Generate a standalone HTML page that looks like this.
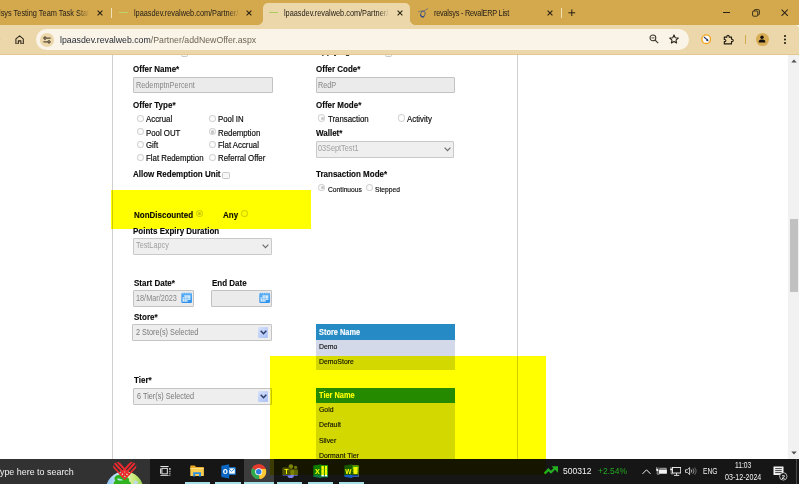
<!DOCTYPE html>
<html lang="en">
<head>
<meta charset="utf-8">
<title>Add New Offer</title>
<style>
*{box-sizing:border-box;margin:0;padding:0}
html,body{width:799px;height:484px;overflow:hidden;background:#fff}
body{position:relative;font-family:"Liberation Sans",Arial,sans-serif;color:#000}
.abs{position:absolute}
/* ---------- browser chrome ---------- */
#tabstrip{position:absolute;left:0;top:0;width:799px;height:25px;background:#d4a84c}
#toolbar{position:absolute;left:0;top:25px;width:799px;height:29.5px;background:#ecd7aa;border-bottom:1px solid #e2c88f;border-top-right-radius:4px}
.tabtxt{position:absolute;top:8.8px;font-size:8.2px;line-height:10px;color:#262118;white-space:nowrap;overflow:hidden;transform:scaleX(.9);transform-origin:0 0}
.tabx{position:absolute;top:9.5px;width:6px;height:6px}
.tsep{position:absolute;top:8px;width:1px;height:9.5px;background:#f1dfb7}
#acttab{position:absolute;left:263.4px;top:3.2px;width:146.4px;height:22px;background:#ecd7aa;border-radius:5px 5px 0 0}
#acttab:before,#acttab:after{content:"";position:absolute;bottom:0;width:5px;height:5px}
#acttab:before{left:-5px;background:radial-gradient(circle at 0 0,rgba(0,0,0,0) 4.6px,#ecd7aa 5px)}
#acttab:after{right:-5px;background:radial-gradient(circle at 100% 0,rgba(0,0,0,0) 4.6px,#ecd7aa 5px)}
#omni{position:absolute;left:36.3px;top:29px;width:652.9px;height:21.4px;border-radius:10.7px;background:#faf4e8}
#url{position:absolute;left:59.8px;top:34px;font-size:9px;line-height:12px;color:#262a33;white-space:nowrap;transform:scaleX(.972);transform-origin:0 0}
#url span{color:#6f6654}
/* ---------- page ---------- */
#page{position:absolute;left:0;top:55px;width:788px;height:404px;background:#fff;overflow:hidden}
.vline{position:absolute;top:55px;width:1px;height:404px;background:#cfcfcf}
.lbl{position:absolute;font-weight:bold;font-size:8.8px;line-height:10px;white-space:nowrap;color:#0a0a0a;-webkit-text-stroke:0.12px #0a0a0a;transform:scaleX(.909);transform-origin:0 0}
.rl{position:absolute;font-size:8.7px;line-height:10px;white-space:nowrap;color:#0c0c0c;-webkit-text-stroke:0.18px #0c0c0c;transform:scaleX(.902);transform-origin:0 0}
.sm{position:absolute;font-size:7.5px;line-height:9px;white-space:nowrap;color:#0c0c0c;-webkit-text-stroke:0.15px #0c0c0c;transform:scaleX(.893);transform-origin:0 0}
.radio{position:absolute;width:7.2px;height:7.6px;margin:-0.3px 0 0 -0.3px;border-radius:50%;border:0.7px solid #d3d3d3;background:#fcfcfc}
.radio.on:after{content:"";position:absolute;left:1.3px;top:1.4px;width:3.2px;height:3.4px;border-radius:50%;background:#c6c6c6}
.inp{position:absolute;height:15.6px;background:#ebebeb;border:1px solid #c2c2c2;border-radius:1px;font-size:7.3px;line-height:15.2px;color:#868686;padding-left:2px;white-space:nowrap;overflow:hidden}
.sel{position:absolute;height:16.6px;background:#efefef;border:1px solid #c9c9c9;border-radius:1px;font-size:7.3px;line-height:14px;color:#a0a0a0;padding-left:1.9px;white-space:nowrap;overflow:hidden}
.dd{position:absolute;height:16.4px;background:#eeeeee;border:1px solid #c4c4c4;border-radius:1px;font-size:7.3px;line-height:15.8px;color:#787878;padding-left:3px;white-space:nowrap;overflow:hidden}
.ddbtn{position:absolute;width:10.6px;height:10.8px;background:linear-gradient(135deg,#d8e2fb 0%,#c0d1f8 50%,#a9c2f5 100%);border-radius:1px}
.cal{position:absolute;width:11.4px;height:11.2px}
.th{position:absolute;left:316px;width:139px;background:#268ac4;color:#fff;font-weight:bold;font-size:7.8px;line-height:15.6px;padding-left:3.2px;white-space:nowrap}
.td{position:absolute;left:316px;width:139px;background:#d3d9e9;color:#111;font-size:6.9px;line-height:15.4px;padding-left:3.2px;white-space:nowrap}
.inp span,.sel span,.dd span,.td span,.th span{display:inline-block;transform-origin:0 50%}
.inp span,.sel span,.dd span{font-size:8.2px;transform:scaleX(.89)}
.th span{-webkit-text-stroke:0.12px;font-size:8.6px;transform:scaleX(.86);position:relative;top:0.9px}
.td span{font-size:7.7px;transform:scaleX(.896);-webkit-text-stroke:0.15px #111}
.hl{position:absolute;background:#ffff00;mix-blend-mode:multiply}
/* ---------- scrollbar ---------- */
#sbar{position:absolute;left:788px;top:55px;width:11px;height:404px;background:#f1f1f1}
#sthumb{position:absolute;left:789.6px;top:218.6px;width:8.4px;height:73px;background:#c1c1c1}
/* ---------- taskbar ---------- */
#taskbar{position:absolute;left:0;top:459px;width:799px;height:25px;background:#161616}
#search{position:absolute;left:0;top:459px;width:149.6px;height:25px;background:#323232}
.tbt{position:absolute;color:#fff;white-space:nowrap}
.ul{position:absolute;top:482.4px;height:1.6px;background:#a6dfe6}
</style>
</head>
<body>

<!-- ======= TAB STRIP ======= -->
<div id="tabstrip"></div>
<div id="toolbar"></div>
<div id="acttab"></div>

<!-- tab 1 -->
<div class="tabtxt" style="left:-0.6px;width:99.6px;-webkit-mask-image:linear-gradient(90deg,#000 88%,transparent 100%);mask-image:linear-gradient(90deg,#000 88%,transparent 100%)">lsys Testing Team Task Status</div>
<svg class="tabx" style="left:96.6px" viewBox="0 0 6 6"><path d="M0.6 0.6L5.4 5.4M5.4 0.6L0.6 5.4" stroke="#2a2215" stroke-width="1.1" fill="none"/></svg>
<div class="tsep" style="left:111px"></div>

<!-- tab 2 -->
<div class="abs" style="left:118.6px;top:11.8px;width:9.4px;height:1.5px;background:#b9d66c;border-radius:1px"></div>
<div class="tabtxt" style="left:133.6px;width:117.4px;letter-spacing:-0.02px;-webkit-mask-image:linear-gradient(90deg,#000 90%,transparent 100%);mask-image:linear-gradient(90deg,#000 90%,transparent 100%)">lpaasdev.revalweb.com/Partner/a</div>
<svg class="tabx" style="left:246.4px" viewBox="0 0 6 6"><path d="M0.6 0.6L5.4 5.4M5.4 0.6L0.6 5.4" stroke="#2a2215" stroke-width="1.1" fill="none"/></svg>

<!-- tab 3 active -->
<div class="abs" style="left:268.6px;top:11.8px;width:9.2px;height:1.5px;background:#a9cc5c;border-radius:1px"></div>
<div class="tabtxt" style="left:283.6px;width:117.4px;letter-spacing:-0.02px;-webkit-mask-image:linear-gradient(90deg,#000 90%,transparent 100%);mask-image:linear-gradient(90deg,#000 90%,transparent 100%)">lpaasdev.revalweb.com/Partner/a</div>
<svg class="tabx" style="left:396.7px" viewBox="0 0 6 6"><path d="M0.6 0.6L5.4 5.4M5.4 0.6L0.6 5.4" stroke="#2a2215" stroke-width="1.1" fill="none"/></svg>

<!-- tab 4 -->
<svg class="abs" style="left:418.4px;top:7.6px;width:10px;height:10px" viewBox="0 0 10 10"><path d="M0.6 3.8C2 3 3.6 2.9 5.2 3.3C6.8 2.7 8.4 1.7 9.6 0.7" stroke="#4a5f8c" stroke-width="0.7" fill="none" stroke-linecap="round"/><ellipse cx="4.9" cy="6" rx="2.2" ry="3" transform="rotate(18 4.9 6)" fill="none" stroke="#34508a" stroke-width="0.75"/><path d="M2.7 7.2C3.1 8.6 4.3 9.3 5.6 8.6" stroke="#2b4a8c" stroke-width="1.2" fill="none" stroke-linecap="round"/></svg>
<div class="tabtxt" style="left:433.6px;width:110px;letter-spacing:-0.27px">revalsys - RevalERP List</div>
<svg class="tabx" style="left:546.7px" viewBox="0 0 6 6"><path d="M0.6 0.6L5.4 5.4M5.4 0.6L0.6 5.4" stroke="#2a2215" stroke-width="1.1" fill="none"/></svg>
<div class="tsep" style="left:561px"></div>
<svg class="abs" style="left:568.4px;top:8.8px;width:7.6px;height:7.6px" viewBox="0 0 8 8"><path d="M4 0.4V7.6M0.4 4H7.6" stroke="#2a2215" stroke-width="1.05" fill="none"/></svg>

<!-- window controls -->
<div class="abs" style="left:723px;top:12.2px;width:7px;height:1px;background:#2a2215"></div>
<svg class="abs" style="left:751.6px;top:9px;width:8px;height:8px" viewBox="0 0 8 8"><rect x="0.6" y="2" width="5.2" height="5.2" rx="1" fill="none" stroke="#2a2215" stroke-width="0.9"/><path d="M2.2 2V1.6A1 1 0 0 1 3.2 0.6H6.4A1 1 0 0 1 7.4 1.6V4.8A1 1 0 0 1 6.4 5.8H5.8" fill="none" stroke="#2a2215" stroke-width="0.9"/></svg>
<svg class="abs" style="left:781px;top:9.2px;width:7.4px;height:7.4px" viewBox="0 0 8 8"><path d="M0.6 0.6L7.4 7.4M7.4 0.6L0.6 7.4" stroke="#2a2215" stroke-width="1.1" fill="none"/></svg>

<!-- ======= TOOLBAR ======= -->
<svg class="abs" style="left:-7.6px;top:35px;width:9px;height:9px" viewBox="0 0 9 9"><path d="M7.6 4.5A3.1 3.1 0 1 1 6.6 2.2" stroke="#2a2215" stroke-width="1" fill="none"/><path d="M5.2 2.9H7.7V0.4Z" fill="#2a2215"/></svg>
<svg class="abs" style="left:15.4px;top:34.8px;width:9.2px;height:9.6px" viewBox="0 0 9.2 9.6"><path d="M0.9 9V3.9L4.6 0.9L8.3 3.9V9H5.9V5.9H3.3V9Z" fill="none" stroke="#2a2215" stroke-width="1.05" stroke-linejoin="round"/></svg>
<div id="omni"></div>
<div class="abs" style="left:40.2px;top:33px;width:13.6px;height:13.6px;border-radius:50%;background:#ecd7aa"></div>
<svg class="abs" style="left:43px;top:36px;width:8px;height:8px" viewBox="0 0 8 8"><path d="M3.6 2.1H7.6M0.4 5.9H4.4" stroke="#2a2215" stroke-width="0.95" fill="none"/><circle cx="2" cy="2.1" r="1.2" fill="none" stroke="#2a2215" stroke-width="0.95"/><circle cx="6" cy="5.9" r="1.2" fill="none" stroke="#2a2215" stroke-width="0.95"/></svg>
<div id="url">lpaasdev.revalweb.com<span>/Partner/addNewOffer.aspx</span></div>

<!-- zoom + star -->
<svg class="abs" style="left:649px;top:34.4px;width:10px;height:10px" viewBox="0 0 10 10"><circle cx="3.9" cy="3.9" r="2.9" fill="none" stroke="#3f392c" stroke-width="1.05"/><path d="M6.1 6.1L9.2 9.2" stroke="#3f392c" stroke-width="1.2" fill="none"/><path d="M2.5 3.9H5.3" stroke="#3f392c" stroke-width="0.9"/></svg>
<svg class="abs" style="left:669.4px;top:34.2px;width:10px;height:10px" viewBox="0 0 10 10"><path d="M5 0.9L6.25 3.7L9.3 4L7 6.05L7.65 9.05L5 7.5L2.35 9.05L3 6.05L0.7 4L3.75 3.7Z" fill="none" stroke="#2a2215" stroke-width="1.05" stroke-linejoin="round"/></svg>

<!-- extension icons -->
<svg class="abs" style="left:700.6px;top:34.4px;width:10.4px;height:10.4px" viewBox="0 0 10.4 10.4"><circle cx="5.2" cy="5.2" r="4.3" fill="#fff" stroke="#f2a31c" stroke-width="1.3"/><path d="M3 3L6.6 6.2" stroke="#26335a" stroke-width="1.1"/><path d="M7.6 7.4L4.9 6.6L6.8 4.7Z" fill="#26335a"/></svg>
<svg class="abs" style="left:723.4px;top:34px;width:11px;height:11px" viewBox="0 0 11 11"><path d="M1.3 3.1H3.9V2.3A1.1 1.1 0 0 1 6.1 2.3V3.1H8.5V5.3H9.1A1.1 1.1 0 0 1 9.1 7.5H8.5V9.9H1.3V7.6H1.8A1.05 1.05 0 0 0 1.8 5.5H1.3Z" fill="none" stroke="#1f1a10" stroke-width="1.1" stroke-linejoin="round"/></svg>
<div class="abs" style="left:745px;top:35.4px;width:1px;height:8.8px;background:#d4a84c"></div>
<div class="abs" style="left:756px;top:33.2px;width:12.8px;height:12.8px;border-radius:50%;background:#d8ad55"></div>
<svg class="abs" style="left:758.4px;top:35.4px;width:8px;height:8px" viewBox="0 0 8 8"><circle cx="4" cy="2.2" r="1.7" fill="#15110a"/><path d="M0.7 7.6V6.7C0.7 5.1 2.6 4.6 4 4.6S7.3 5.1 7.3 6.7V7.6Z" fill="#15110a"/></svg>
<div class="abs" style="left:784.2px;top:35.2px;width:1.6px;height:1.6px;background:#2a2215;border-radius:50%;box-shadow:0 3.5px 0 #2a2215,0 7px 0 #2a2215"></div>

<!-- ======= PAGE ======= -->
<div id="page"></div>
<div class="vline" style="left:111.8px"></div>
<div class="vline" style="left:517px"></div>

<!-- PAGE-CONTENT -->
<!-- clipped previous row -->
<div class="abs" style="left:0;top:55px;width:788px;height:8px;overflow:hidden">
<div class="lbl" style="left:316px;top:-8.6px;color:#222">Applying On</div>
<div class="abs" style="left:384.6px;top:-5.2px;width:7px;height:7px;border:0.7px solid #c8c8c8;border-radius:1.5px;background:#f6f6f6"></div>
<div class="abs" style="left:180.6px;top:-5.2px;width:7px;height:7px;border:0.7px solid #c8c8c8;border-radius:1.5px;background:#f6f6f6"></div>
</div>

<!-- left column -->
<div class="lbl" style="left:133px;top:63.8px">Offer Name*</div>
<div class="inp" style="left:133px;top:77px;width:140.2px"><span>RedemptnPercent</span></div>
<div class="lbl" style="left:133px;top:100px">Offer Type*</div>

<div class="radio" style="left:136.8px;top:115.2px"></div><div class="rl" style="left:146.2px;top:114.3px">Accrual</div>
<div class="radio" style="left:208.8px;top:115.2px"></div><div class="rl" style="left:218px;top:114.3px">Pool IN</div>
<div class="radio" style="left:136.8px;top:128.2px"></div><div class="rl" style="left:146.2px;top:127.5px">Pool OUT</div>
<div class="radio on" style="left:208.8px;top:128.2px"></div><div class="rl" style="left:218px;top:127.5px">Redemption</div>
<div class="radio" style="left:136.8px;top:141.2px"></div><div class="rl" style="left:146.2px;top:139.8px">Gift</div>
<div class="radio" style="left:208.8px;top:141.2px"></div><div class="rl" style="left:218px;top:139.8px">Flat Accrual</div>
<div class="radio" style="left:136.8px;top:154px"></div><div class="rl" style="left:146.2px;top:152.6px">Flat Redemption</div>
<div class="radio" style="left:208.8px;top:154px"></div><div class="rl" style="left:218px;top:152.6px">Referral Offer</div>

<div class="lbl" style="left:133px;top:169px">Allow Redemption Unit</div>
<div class="abs" style="left:222.2px;top:172px;width:7.4px;height:7.4px;border:0.7px solid #c8c8c8;border-radius:1.5px;background:#f8f8f8"></div>

<div class="lbl" style="left:134.4px;top:209.5px">NonDiscounted</div>
<div class="radio on" style="left:196px;top:210px"></div>
<div class="lbl" style="left:222.6px;top:209.5px">Any</div>
<div class="radio" style="left:241.2px;top:210px"></div>

<div class="lbl" style="left:133.4px;top:225.8px">Points Expiry Duration</div>
<div class="sel" style="left:133px;top:238.2px;width:138.6px"><span>TestLapcy</span></div>
<svg class="abs" style="left:261.8px;top:244.4px;width:7px;height:4.6px" viewBox="0 0 7 4.6"><path d="M0.6 0.7L3.5 3.7L6.4 0.7" fill="none" stroke="#6c6c6c" stroke-width="1.15"/></svg>

<div class="lbl" style="left:134px;top:277.6px">Start Date*</div>
<div class="lbl" style="left:212px;top:277.6px">End Date</div>
<div class="inp" style="left:133px;top:290.4px;width:60.6px;height:16.2px;line-height:15.4px;padding-left:2.4px"><span>18/Mar/2023</span></div>
<div class="inp" style="left:211.4px;top:290.4px;width:60.8px;height:16.2px"></div>
<svg class="cal" style="left:180.7px;top:292.3px" viewBox="0 0 11.2 11"><defs><linearGradient id="cg" x1="0" y1="0" x2="0" y2="1"><stop offset="0" stop-color="#5cb0f7"/><stop offset="1" stop-color="#2f90ea"/></linearGradient></defs><rect x="0.3" y="0.7" width="10.6" height="10.1" rx="1.3" fill="url(#cg)"/><path d="M2.1 0.3V1.6M4.4 0.3V1.6M6.7 0.3V1.6M9 0.3V1.6" stroke="#ebebeb" stroke-width="0.8"/><path d="M3.1 3.3H9.2V7.9H6.5V9.5H1.5V5.1H3.1Z" fill="#d3eafd"/><path d="M1.6 6.6H8.8M3.6 3.6V9.3M6 3.6V9.3" stroke="#5aaef5" stroke-width="0.5"/></svg>
<svg class="cal" style="left:259.3px;top:292.3px" viewBox="0 0 11.2 11"><rect x="0.3" y="0.7" width="10.6" height="10.1" rx="1.3" fill="url(#cg)"/><path d="M2.1 0.3V1.6M4.4 0.3V1.6M6.7 0.3V1.6M9 0.3V1.6" stroke="#ebebeb" stroke-width="0.8"/><path d="M3.1 3.3H9.2V7.9H6.5V9.5H1.5V5.1H3.1Z" fill="#d3eafd"/><path d="M1.6 6.6H8.8M3.6 3.6V9.3M6 3.6V9.3" stroke="#5aaef5" stroke-width="0.5"/></svg>

<div class="lbl" style="left:134px;top:312.2px">Store*</div>
<div class="dd" style="left:132.2px;top:324.2px;width:139.4px"><span>2 Store(s) Selected</span></div>
<div class="ddbtn" style="left:257.7px;top:327px"></div>
<svg class="abs" style="left:259.6px;top:330.2px;width:7px;height:5px" viewBox="0 0 7 5"><path d="M0.7 0.8L3.5 3.7L6.3 0.8" fill="none" stroke="#2c3a68" stroke-width="1.5"/></svg>

<div class="lbl" style="left:134px;top:375px">Tier*</div>
<div class="dd" style="left:133px;top:388.2px;width:138.6px"><span>6 Tier(s) Selected</span></div>
<div class="ddbtn" style="left:257.7px;top:391px"></div>
<svg class="abs" style="left:259.6px;top:394.2px;width:7px;height:5px" viewBox="0 0 7 5"><path d="M0.7 0.8L3.5 3.7L6.3 0.8" fill="none" stroke="#2c3a68" stroke-width="1.5"/></svg>

<!-- right column -->
<div class="lbl" style="left:316px;top:63.8px">Offer Code*</div>
<div class="inp" style="left:316px;top:77px;width:138.6px;padding-left:1px"><span>RedP</span></div>
<div class="lbl" style="left:316px;top:100px">Offer Mode*</div>
<div class="radio on" style="left:318.6px;top:114.6px"></div><div class="rl" style="left:327.8px;top:114px">Transaction</div>
<div class="radio" style="left:398px;top:114.6px"></div><div class="rl" style="left:407px;top:114px">Activity</div>
<div class="lbl" style="left:316px;top:127.8px">Wallet*</div>
<div class="sel" style="left:316px;top:141.2px;width:138.2px;height:16.6px;padding-left:1px"><span>03SeptTest1</span></div>
<svg class="abs" style="left:444.4px;top:147.4px;width:7px;height:4.6px" viewBox="0 0 7 4.6"><path d="M0.6 0.7L3.5 3.7L6.4 0.7" fill="none" stroke="#6c6c6c" stroke-width="1.15"/></svg>
<div class="lbl" style="left:316px;top:169px">Transaction Mode*</div>
<div class="radio on" style="left:318.6px;top:184px"></div><div class="sm" style="left:328px;top:184.8px">Continuous</div>
<div class="radio" style="left:366.6px;top:184px"></div><div class="sm" style="left:375.2px;top:184.8px">Stepped</div>

<!-- tables -->
<div class="th" style="top:324.2px;height:15.6px"><span>Store Name</span></div>
<div class="td" style="top:339.8px;height:15.6px;line-height:14.4px"><span>Demo</span></div>
<div class="td" style="top:355.4px;height:14.6px;line-height:13.6px"><span>DemoStore</span></div>
<div class="th" style="top:388px;height:15px;line-height:13.4px"><span>Tier Name</span></div>
<div class="td" style="top:403px;height:56px;line-height:14px"><span>Gold</span></div>
<div class="td" style="top:417.4px;background:none"><span>Default</span></div>
<div class="td" style="top:432.8px;background:none"><span>Silver</span></div>
<div class="td" style="top:447.8px;background:none"><span>Dormant Tier</span></div>
<!-- /PAGE-CONTENT -->

<!-- ======= SCROLLBAR ======= -->
<div id="sbar"></div>
<div id="sthumb"></div>
<svg class="abs" style="left:790.6px;top:58.6px;width:6px;height:4px" viewBox="0 0 6 4"><path d="M0.3 3.6L3 0.5L5.7 3.6Z" fill="#505050"/></svg>
<svg class="abs" style="left:790.6px;top:451.4px;width:6px;height:4px" viewBox="0 0 6 4"><path d="M0.3 0.4L3 3.5L5.7 0.4Z" fill="#505050"/></svg>

<!-- ======= TASKBAR ======= -->
<div id="taskbar"></div>
<div id="search"></div>
<!-- TASKBAR-CONTENT -->
<div class="tbt" style="left:-5.5px;top:465.6px;font-size:9.2px;line-height:12px;transform:scaleX(.97);transform-origin:0 0;color:#f2f2f2">Type here to search</div>
<!-- search highlight art: globe + red heart -->
<svg class="abs" style="left:104px;top:459px;width:42px;height:25px" viewBox="0 0 42 25">
<defs><clipPath id="gcl"><rect x="0" y="0" width="42" height="25"/></clipPath>
<linearGradient id="gg" x1="0" y1="0" x2="1" y2="0"><stop offset="0" stop-color="#86bdf0"/><stop offset="0.3" stop-color="#c4e2f9"/><stop offset="0.55" stop-color="#d9f0c0"/><stop offset="0.75" stop-color="#cdea78"/><stop offset="1" stop-color="#8fd253"/></linearGradient></defs>
<g clip-path="url(#gcl)">
<circle cx="20.6" cy="31" r="18.8" fill="url(#gg)"/>
<path d="M11.2 17.4C12.6 16 15 15.6 16.6 16.2C17.4 16.8 18.6 16.4 19.4 17.2C20.6 18 22.4 17.8 23.6 18.6C25 19.6 25.6 21 24.8 22.2C26.2 22.8 27.4 24 27 25H9.4C10 23.6 10.2 22.4 11.2 21.8C10.2 20.4 10.2 18.6 11.2 17.4Z" fill="#2fb41f"/>
<path d="M13.4 19.6C14.6 19.2 15.8 19.6 16.6 20.2C17.6 20.2 18.8 20.6 18.6 21.4C17.6 21.8 16 21.4 15 21.4C14 21.4 13 20.6 13.4 19.6Z" fill="#bfe4f7"/>
<path d="M30.6 21.6C32 21.2 33.6 22.2 34.2 23.6C34 24.4 33 25 32 25H29.8C29.4 23.8 29.6 22.2 30.6 21.6Z" fill="#b9d9f4" opacity="0.9"/>
<clipPath id="hcl"><path d="M20.7 21L9.7 9.6C8.3 7.4 9.2 4.4 11.8 3.4C14.6 2.4 17.6 3.8 20.7 8.2C23.8 3.8 26.8 2.4 29.6 3.4C32.2 4.4 33.1 7.4 31.7 9.6Z"/></clipPath>
<g clip-path="url(#hcl)" stroke="#ee2a2e" stroke-width="2" fill="none">
<path d="M12.1 1.05L32.1 23.05M9.3 2.6L29.3 24.6M6.2 4.5L26.2 26.5"/>
<path d="M29.3 1.05L9.3 23.05M32.1 2.6L12.1 24.6M35.2 4.5L15.2 26.5"/>
</g>
</g></svg>

<!-- task view -->
<svg class="abs" style="left:159.6px;top:466px;width:11.2px;height:10.2px" viewBox="0 0 11.2 10.2"><rect x="1.9" y="2.3" width="5.4" height="5.6" fill="none" stroke="#fff" stroke-width="0.9"/><path d="M0.4 0.5H8.6M0.4 9.7H8.6" stroke="#fff" stroke-width="0.9"/><path d="M0.5 2.4V7.8" stroke="#fff" stroke-width="0.8"/><rect x="9.2" y="2.2" width="1.4" height="1.5" fill="#fff"/><path d="M9.9 4.8V9.9" stroke="#fff" stroke-width="0.9" stroke-dasharray="1.2 0.7"/></svg>

<!-- file explorer -->
<svg class="abs" style="left:190px;top:465.4px;width:14.2px;height:11.8px" viewBox="0 0 14.2 11.8"><path d="M0.3 1.2A0.7 0.7 0 0 1 1 0.5H4.8L6 1.9H13.2A0.7 0.7 0 0 1 13.9 2.6V4H0.3Z" fill="#e9a824"/><rect x="0.3" y="2.9" width="13.6" height="8" rx="0.5" fill="#f8cd52"/><rect x="0.3" y="2.9" width="13.6" height="1.1" fill="#fbdc7a"/><path d="M3.2 11.4V7.2H11V11.4H8.9V9H5.3V11.4Z" fill="#2d8fe3"/><rect x="5.3" y="9" width="3.6" height="1.1" fill="#f8cd52"/></svg>
<div class="ul" style="left:184.6px;width:25.4px"></div>

<!-- outlook -->
<svg class="abs" style="left:220.6px;top:464px;width:15px;height:14.6px" viewBox="0 0 15 14.6"><rect x="6.4" y="3.2" width="8.3" height="7.6" fill="#1a7fdc"/><path d="M7.4 4.4H13.8V9.6H7.4Z" fill="#fff"/><path d="M7.4 4.4L10.6 7.4L13.8 4.4" fill="none" stroke="#1a7fdc" stroke-width="0.9"/><path d="M0.3 1.7L8.2 0.2V14.4L0.3 12.9Z" fill="#0a67c4"/><text x="4.25" y="9.9" font-family="Liberation Sans,Arial,sans-serif" font-weight="bold" font-size="8.4" fill="#fff" text-anchor="middle">o</text></svg>
<div class="ul" style="left:215.4px;width:25.4px"></div>

<!-- chrome (active) -->
<div class="abs" style="left:244.3px;top:459px;width:29.6px;height:25px;background:#3c3c3c"></div>
<svg class="abs" style="left:251.2px;top:463.6px;width:15.4px;height:15.4px" viewBox="-7.7 -7.7 15.4 15.4"><circle r="7.5" fill="#e33b2e"/><path d="M0 0L-6.5 -3.75A7.5 7.5 0 0 0 0.9 7.45Z" fill="#2da94f"/><path d="M0 0L0.9 7.45A7.5 7.5 0 0 0 6.9 -2.95L0 -3Z" fill="#fcc934"/><path d="M-6.5 -3.75A7.5 7.5 0 0 1 6.9 -2.95L0 -3Z" fill="#e33b2e"/><circle r="3.55" fill="#fff"/><circle r="2.75" fill="#2f7de1"/></svg>
<div class="ul" style="left:244.3px;width:29.6px"></div>

<!-- teams -->
<svg class="abs" style="left:281.6px;top:463.8px;width:16.4px;height:14.6px" viewBox="0 0 16.4 14.6"><circle cx="13.6" cy="3.4" r="1.7" fill="#6d74d6"/><circle cx="8.9" cy="2.6" r="2.3" fill="#7b83eb"/><path d="M11.4 5.4H16A0.4 0.4 0 0 1 16.4 5.8V9.6A2.6 2.6 0 0 1 11.4 10.4Z" fill="#5d64c9"/><path d="M5.6 5.4H12.2V10.6A3.6 3.6 0 0 1 8.6 14.2A3.6 3.6 0 0 1 5.6 12.4Z" fill="#7b83eb"/><rect x="0.3" y="3.6" width="8.2" height="8.2" rx="0.8" fill="#4b53bc"/><text x="4.4" y="10.2" font-family="Liberation Sans,Arial,sans-serif" font-weight="bold" font-size="6.6" fill="#fff" text-anchor="middle">T</text></svg>
<div class="ul" style="left:276.8px;width:25.4px"></div>

<!-- excel -->
<svg class="abs" style="left:313.4px;top:464px;width:14.8px;height:14.4px" viewBox="0 0 14.8 14.4"><rect x="7" y="1.6" width="7.5" height="11.2" fill="#fff"/><rect x="7" y="1.6" width="7.5" height="11.2" fill="none" stroke="#21a366" stroke-width="0.9"/><path d="M11.4 1.6V12.8" stroke="#107c41" stroke-width="1"/><path d="M8.4 5.3H14.5M8.4 9.1H14.5" stroke="#8fd3a8" stroke-width="0.5"/><path d="M0.3 1.6L8.4 0.2V14.2L0.3 12.8Z" fill="#107c41"/><text x="4.3" y="10" font-family="Liberation Sans,Arial,sans-serif" font-weight="bold" font-size="7.2" fill="#fff" text-anchor="middle">X</text></svg>
<div class="ul" style="left:308.3px;width:25px"></div>

<!-- word -->
<svg class="abs" style="left:344.2px;top:464px;width:14.8px;height:14.4px" viewBox="0 0 14.8 14.4"><rect x="7" y="1.6" width="7.5" height="11.2" fill="#fff"/><rect x="7" y="1.6" width="7.5" height="3.2" fill="#41a5ee"/><rect x="7" y="4.8" width="7.5" height="2.8" fill="#2b7cd3"/><rect x="7" y="7.6" width="7.5" height="2.6" fill="#185abd"/><rect x="7" y="10.2" width="7.5" height="2.6" fill="#103f91"/><rect x="9.4" y="3" width="4.2" height="7" fill="#fff" opacity="0.92"/><path d="M0.3 1.6L8.4 0.2V14.2L0.3 12.8Z" fill="#185abd"/><text x="4.3" y="9.9" font-family="Liberation Sans,Arial,sans-serif" font-weight="bold" font-size="6.6" fill="#fff" text-anchor="middle">W</text></svg>
<div class="ul" style="left:339px;width:25px"></div>

<!-- stock widget -->
<svg class="abs" style="left:543.6px;top:466.4px;width:14.4px;height:9px" viewBox="0 0 14.4 9"><path d="M0.6 7.6L4.4 3.6L7 6.2L11.2 2" fill="none" stroke="#25b022" stroke-width="2.3" stroke-linejoin="miter"/><path d="M7.6 0.3H14V6.7Z" fill="#25b022"/></svg>
<div class="tbt" style="left:563.4px;top:465.4px;font-size:9px;line-height:12px;transform:scaleX(.95);transform-origin:0 0;color:#f2f2f2">500312</div>
<div class="tbt" style="left:598px;top:465.4px;font-size:9px;line-height:12px;transform:scaleX(.94);transform-origin:0 0;color:#23a820">+2.54%</div>

<!-- tray -->
<svg class="abs" style="left:641.6px;top:468.6px;width:9px;height:5.4px" viewBox="0 0 9 5.4"><path d="M0.5 4.9L4.5 0.8L8.5 4.9" fill="none" stroke="#f2f2f2" stroke-width="1"/></svg>
<svg class="abs" style="left:655.6px;top:467.2px;width:11.4px;height:7.6px" viewBox="0 0 11.4 7.6"><rect x="2.7" y="2.5" width="8.2" height="4.3" rx="0.5" fill="#f2f2f2"/><rect x="10.9" y="3.8" width="0.5" height="1.8" fill="#f2f2f2"/><path d="M3.4 1.3H10.2V2.5" stroke="#f2f2f2" stroke-width="0.7" fill="none"/><path d="M0.5 0.3V2M2 0.3V2" stroke="#f2f2f2" stroke-width="0.6"/><path d="M0.2 1.9H2.3V3.5L1.7 4.2H0.8L0.2 3.5Z" fill="#f2f2f2"/><path d="M1.25 4.2V7.2H3.4" stroke="#f2f2f2" stroke-width="0.6" fill="none"/></svg>
<svg class="abs" style="left:670.2px;top:466.8px;width:11.2px;height:9px" viewBox="0 0 11.2 9"><rect x="2.5" y="0.5" width="8.2" height="5.5" fill="none" stroke="#f2f2f2" stroke-width="0.9"/><path d="M6.6 6V8M4 8.4H9.2" stroke="#f2f2f2" stroke-width="0.9"/><path d="M0.4 0.3V1.8M1.8 0.3V1.8" stroke="#f2f2f2" stroke-width="0.55"/><rect x="0.2" y="1.7" width="1.9" height="1.5" fill="#f2f2f2"/><path d="M1.15 3.2V6.9H3.4" stroke="#f2f2f2" stroke-width="0.6" fill="none"/></svg>
<svg class="abs" style="left:685.4px;top:467.2px;width:12px;height:8.2px" viewBox="0 0 12 8.2"><path d="M0.5 2.8H2.3L4.6 0.6V7.6L2.3 5.4H0.5Z" fill="none" stroke="#f2f2f2" stroke-width="0.8" stroke-linejoin="round"/><path d="M6.2 2.6A2.4 2.4 0 0 1 6.2 5.6" fill="none" stroke="#f2f2f2" stroke-width="0.75"/><path d="M7.9 1.5A4 4 0 0 1 7.9 6.7" fill="none" stroke="#bdbdbd" stroke-width="0.75"/><path d="M9.6 0.5A5.6 5.6 0 0 1 9.6 7.7" fill="none" stroke="#8a8a8a" stroke-width="0.75"/></svg>
<div class="tbt" style="left:702.6px;top:465.2px;font-size:8.3px;line-height:12px;transform:scaleX(.805);transform-origin:0 0;color:#f2f2f2">ENG</div>
<div class="tbt" style="left:735px;top:459.4px;font-size:8.3px;line-height:12px;transform:scaleX(.81);transform-origin:0 0;color:#f2f2f2">11:03</div>
<div class="tbt" style="left:725.2px;top:470.8px;font-size:8.3px;line-height:12px;transform:scaleX(.855);transform-origin:0 0;color:#f2f2f2">03-12-2024</div>
<svg class="abs" style="left:772.6px;top:465.6px;width:15px;height:15px" viewBox="0 0 15 15"><path d="M0.5 0.5H10.5V9H9V11.2L6.6 9H0.5Z" fill="#f4f4f4"/><path d="M2.2 2.6H8.8M2.2 4.6H8.8M2.2 6.6H8.8" stroke="#161616" stroke-width="0.8"/><circle cx="10.3" cy="10.4" r="3.7" fill="#161616" stroke="#f2f2f2" stroke-width="0.7"/><text x="10.3" y="12.5" font-family="Liberation Sans,Arial,sans-serif" font-weight="bold" font-size="5.8" fill="#f2f2f2" text-anchor="middle">2</text></svg>
<div class="abs" style="left:795.6px;top:459px;width:1px;height:25px;background:#4a4a4a"></div>
<!-- /TASKBAR-CONTENT -->

<!-- HIGHLIGHTS -->
<div class="hl" style="left:111px;top:190.4px;width:200.4px;height:38.9px"></div>
<div class="hl" style="left:270px;top:355.8px;width:276px;height:119.7px"></div>
<!-- /HIGHLIGHTS -->

</body>
</html>
